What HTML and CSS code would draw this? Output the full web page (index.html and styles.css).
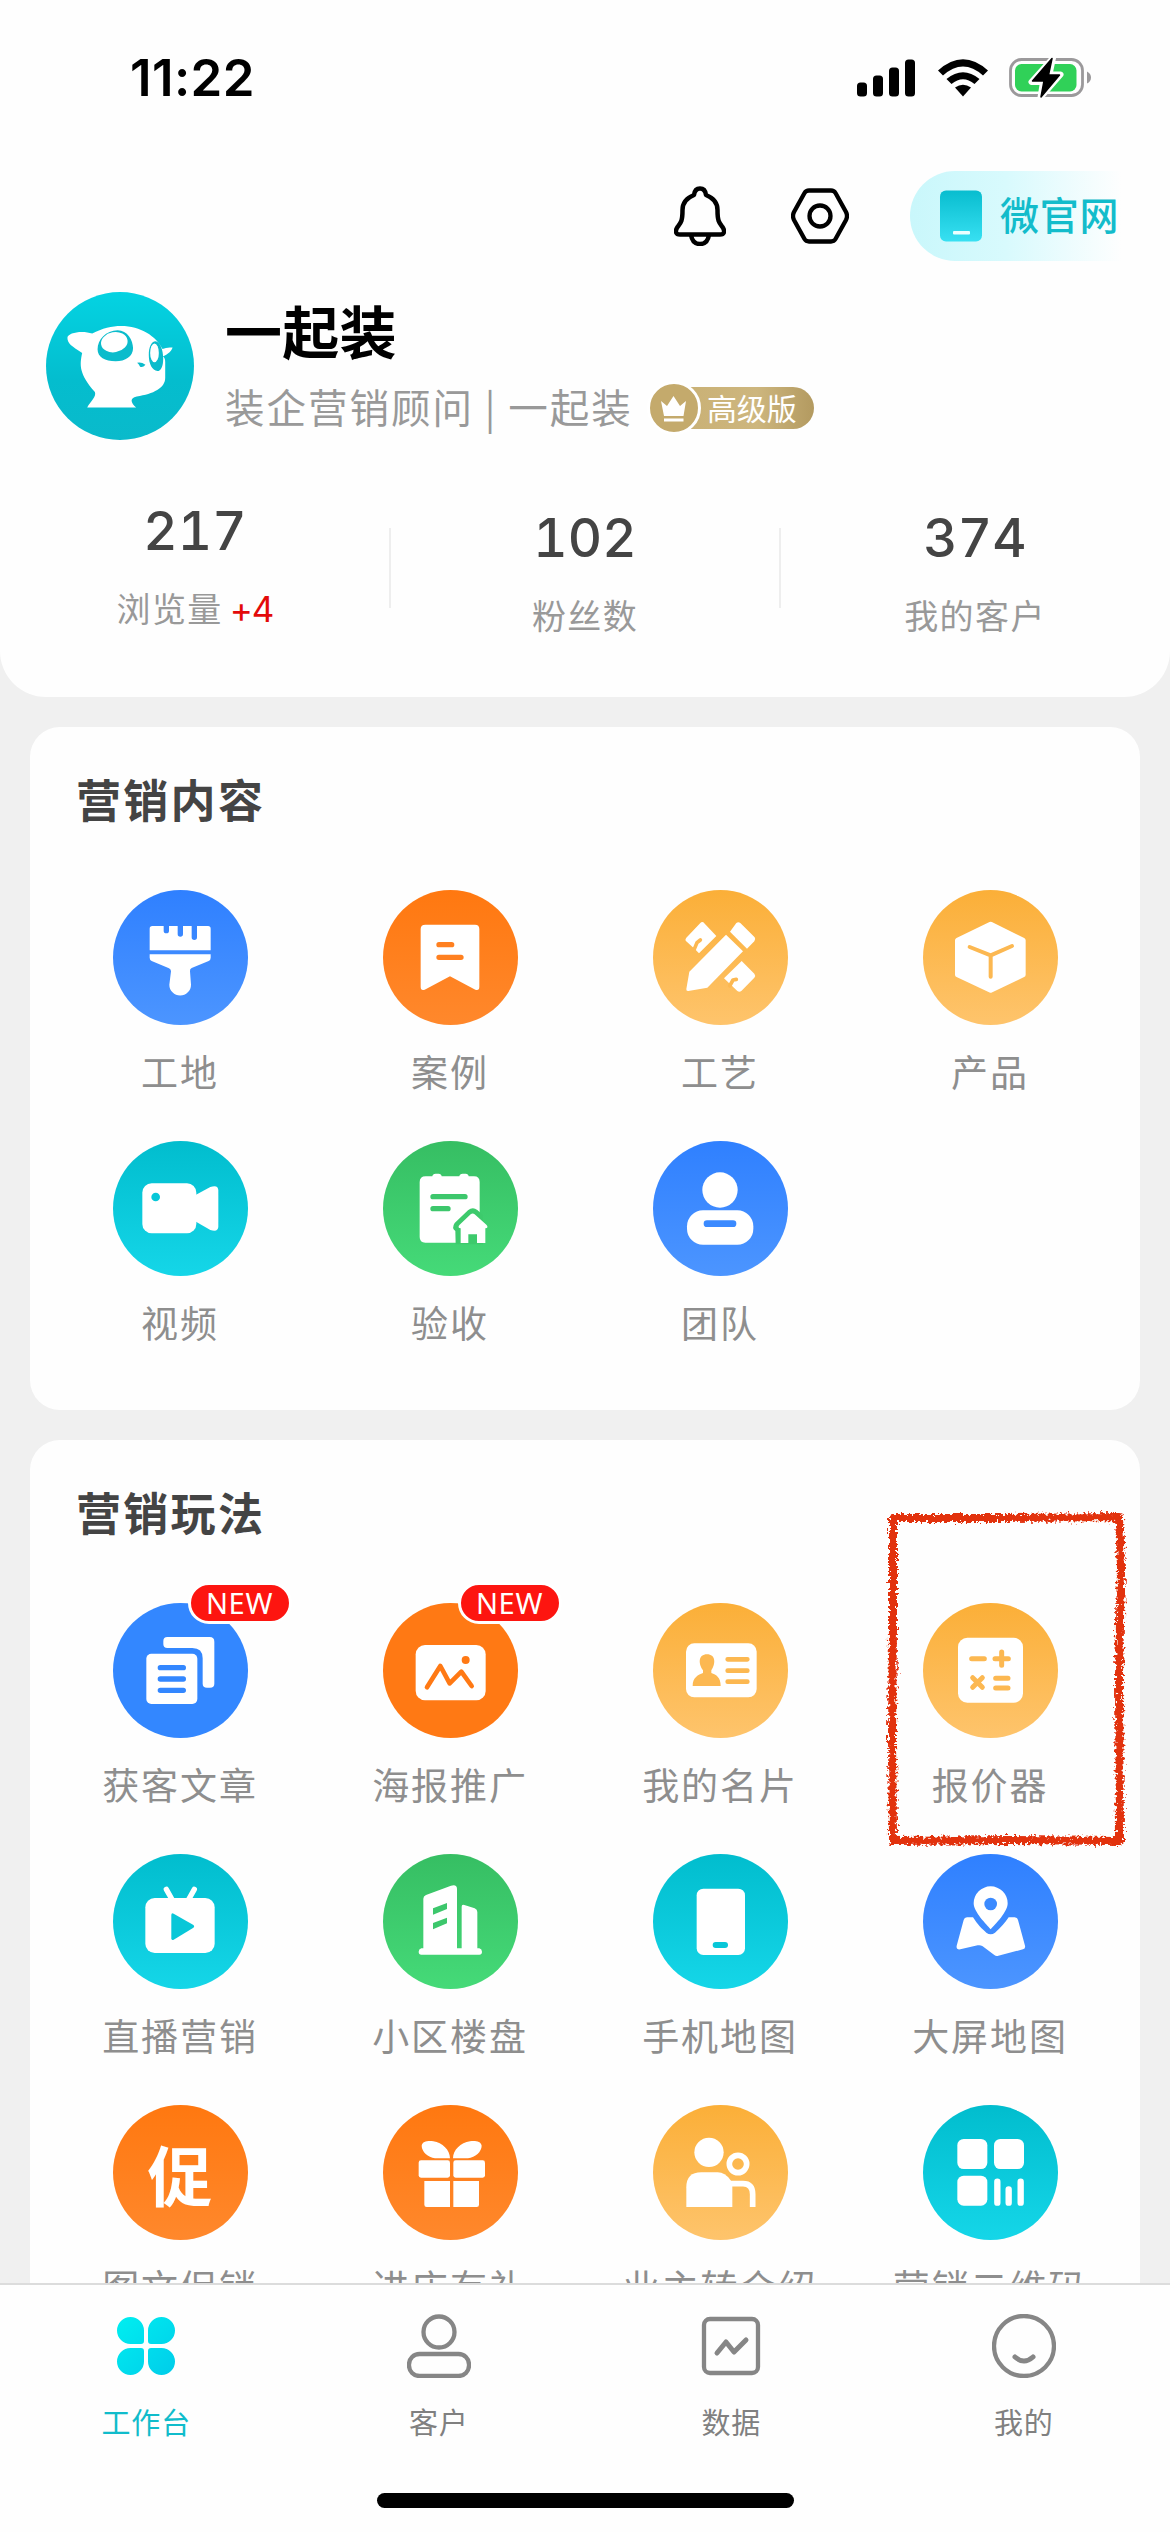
FILE: index.html
```html
<!DOCTYPE html>
<html lang="zh-CN">
<head>
<meta charset="utf-8">
<meta name="viewport" content="width=1170">
<title>工作台</title>
<link rel="stylesheet" href="styles.css">
</head>
<body>
<div class="phone">
  <header class="header">
    <div class="status">
      <span class="time">11:22</span>
      <div class="status-icons">
        <svg width="58" height="38" viewBox="0 0 58 38"><rect x="0" y="23.500" width="10" height="14" rx="3.500"/><rect x="16" y="16.500" width="10" height="21" rx="3.500"/><rect x="32" y="8.500" width="10" height="29" rx="3.500"/><rect x="48" y="0.500" width="10" height="37" rx="3.500"/></svg>
        <svg class="wifi" width="50" height="38" viewBox="0 0 50 38"><path d="M0 11.500Q25-11 50 11.500L45 16.500Q25-1.500 5 16.500Z"/><path d="M8.500 20Q25 6.500 41.500 20L36.500 25Q25 15.500 13.500 25Z"/><path d="M17 28.500Q25 23 33 28.500L25 37.500Z"/></svg>
        <svg class="battery" width="83" height="42" viewBox="0 0 83 42"><rect x="1.500" y="2.500" width="72" height="36" rx="11" fill="none" stroke="#9b999b" stroke-width="2.800"/><rect x="6" y="7" width="61.500" height="27.500" rx="6.500" fill="#30d158"/><path d="M78 14.500q4 2 4 6t-4 6z" fill="#9b999b"/><path d="M44 1L22.500 25H34L31.500 40.500 51.500 17.500H40.500Z" stroke="#fff" stroke-width="6" stroke-linejoin="round"/><path d="M43 1.500L23.500 24H35L32 40 50.500 18H39.500Z" stroke="#000" stroke-width="1.500" stroke-linejoin="round"/></svg>
      </div>
    </div>
    <div class="toolbar">
      <svg class="bell" width="52" height="60" viewBox="0 0 52 60" fill="none" stroke="#000" stroke-width="4.500" stroke-linejoin="round"><path d="M26 2.500C22 2.500 20.500 5 20 9 12.500 12 8.500 17 8.500 24 8.500 35 7 36.500 3.500 41 .5 45.500 2 48.500 6 48.500H46C50 48.500 51.500 45.500 48.500 41 45 36.500 43.500 35 43.500 24 43.500 17 39.500 12 32 9 31.500 5 30 2.500 26 2.500Z"/><path d="M17 49q1.500 9 9 9t9-9"/></svg>
      <svg class="gear" width="58" height="56" viewBox="0 0 58 56" fill="none" stroke="#000" stroke-width="4.300"><path d="M18 2.500H40Q43 2.500 44.500 5L55 24Q57 28 55 32L44.500 51Q43 53.500 40 53.500H18Q15 53.500 13.500 51L3 32Q1 28 3 24L13.500 5Q15 2.500 18 2.500Z"/><circle cx="29" cy="28" r="10.500"/></svg>
      <div class="site-pill">
        <svg width="42" height="52" viewBox="0 0 42 52"><defs><linearGradient id="siteFill" x1="0" y1="0" x2="0" y2="1"><stop offset="0" stop-color="#08bdcf"/><stop offset="1" stop-color="#38e0f2"/></linearGradient></defs><rect width="42" height="51" y=".5" rx="6" fill="url(#siteFill)"/><rect x="13" y="41" width="17" height="3.500" rx="1" fill="#eaffff"/></svg>
        <span>微官网</span>
      </div>
    </div>
    <div class="profile">
      <svg class="avatar" width="148" height="148" viewBox="49 36 442 442"><defs><linearGradient id="avatarFill" x1="0" y1="0" x2="0" y2="1"><stop offset="0" stop-color="#04d3e2"/><stop offset=".6" stop-color="#04bdce"/><stop offset="1" stop-color="#0abacb"/></linearGradient></defs>
        <circle cx="270" cy="257" r="221" fill="url(#avatarFill)"/>
        <path fill="#fff" d="M187 160C160 150 113 156 113 173 113 190 125 198 157 218 149 255 148 280 195 335 200 350 183 361 172 381H318C302 366 298 353 320 348 370 340 405 323 405 292V245Q405 233 398 229C415 222 425 210 427 202Q410 200 397 206C370 150 280 110 187 160Z"/>
        <path fill="#0bbccc" d="M203 207C203 178 228 151 263 150 292 150 309 180 309 204 309 228 286 243 257 243 225 243 203 230 203 207ZM356 225C356 200 364 183 376 183 390 184 399 210 399 235 399 258 392 272 382 272 366 271 356 250 356 225ZM321 247Q334 244 346 253 338 263 330 259 326 250 321 247Z"/>
        <ellipse cx="253" cy="186" rx="40" ry="30" fill="#fff" transform="rotate(-10 253 186)"/><ellipse cx="373" cy="218" rx="13" ry="28" fill="#fff"/>
      </svg>
      <div class="identity">
        <h1>一起装</h1>
        <div class="role"><span>装企营销顾问 | 一起装</span>
          <div class="level">
            <svg width="54" height="54" viewBox="0 0 54 54"><circle cx="27" cy="27" r="25.500" fill="#c4aa6c" stroke="#fff" stroke-width="3"/><path fill="#fff" d="M14 20L20 25 26.500 15 33 25 39 20 36.500 35H17ZM17 37.500H36.500V40.500H17Z"/></svg>
            <span>高级版</span>
          </div>
        </div>
      </div>
    </div>
    <div class="stats">
      <div class="stat stat-raised"><strong>217</strong><span>浏览量<em>+4</em></span></div>
      <div class="stat"><strong>102</strong><span>粉丝数</span></div>
      <div class="stat"><strong>374</strong><span>我的客户</span></div>
    </div>
  </header>

  <main class="content">
    <section class="card card-content">
      <h2>营销内容</h2>
      <div class="grid">
        <div class="item"><div class="icon blue"><svg viewBox="0 0 405 405"><path d="M118 108H152V122a8 8 0 0 0 16 0V108H194V132a8 8 0 0 0 16 0V108H236V142a8 8 0 0 0 16 0V108H285q8 0 8 8V181H110V116q0-8 8-8ZM110 193H293V203q0 7-6 10L236 234q-6 3-5 10L234 284a32 32 0 0 1-65 0L174 244q0-6-6-9L116 213q-6-3-6-10Z"/></svg></div><span>工地</span></div>
        <div class="item"><div class="icon orange"><svg viewBox="0 0 405 405"><path d="M127 104H276q13 0 13 13V290q0 13-12 9L201 259 125 299q-12 4-12-9V117q0-13 14-13Z"/><path class="cut" stroke-width="16" d="M168 164H206M168 202H234"/></svg></div><span>案例</span></div>
        <div class="item"><div class="icon amber"><svg viewBox="0 0 405 405"><path d="M219 134L270 184 163 293 106 303Q99 304 100 297L109 245ZM250 99Q256 94 262 99L305 142Q309 148 304 154L282 176 231 125ZM151 97L190 138 138 190 126 178 98 152Q96 148 100 143L142 99Q146 95 151 97ZM266 213L304 251Q309 257 304 263L265 303Q259 307 253 303L213 265Z"/><path class="cut" stroke-width="11" d="M122 182L132 158 142 150M230 288L240 270 250 268"/></svg></div><span>工艺</span></div>
        <div class="item"><div class="icon amber"><svg viewBox="0 0 405 405"><path stroke="#fff" stroke-width="16" stroke-linejoin="round" d="M203 103L300 151V254L203 300 104 254V151Z"/><path class="cut" stroke-width="12" d="M140 171L203 196 267 168M203 196V260"/></svg></div><span>产品</span></div>
        <div class="item"><div class="icon cyan"><svg viewBox="0 0 405 405"><rect x="88" y="127" width="162" height="150" rx="28"/><path d="M249 161L292 138Q316 130 316 149V256Q316 275 292 267L249 242Z"/><circle class="solid-cut" cx="128" cy="168" r="13"/></svg></div><span>视频</span></div>
        <div class="item"><div class="icon green"><svg viewBox="0 0 405 405"><path d="M128 106H148Q149 98 158 98H167Q175 98 176 106H229Q230 98 239 98H248Q256 98 257 106H273Q290 106 290 123V305H127Q110 305 110 288V123Q110 106 128 106Z"/><path class="cut" stroke-width="16" d="M150 167H246M150 203H195"/><path fill="#3dca6c" d="M218 310L217 270Q205 261 215 246L255 208Q269 196 283 207L300 222V310H218Z"/><path d="M263 220Q269 215 275 220L310 251Q318 260 307 262V306H282V280H256V306H233V262Q222 260 230 251Z"/></svg></div><span>验收</span></div>
        <div class="item"><div class="icon blue"><svg viewBox="0 0 405 405"><circle cx="201" cy="147" r="53"/><rect x="102" y="208" width="199" height="103" rx="48"/><path class="cut" stroke-width="20" d="M162 248H240"/></svg></div><span>团队</span></div>
      </div>
    </section>

    <section class="card card-play">
      <h2>营销玩法</h2>
      <div class="grid">
        <div class="item"><div class="icon blue flat"><svg viewBox="0 0 405 405"><rect x="100" y="152" width="153" height="151" rx="15"/><path d="M163 102H290Q304 102 304 116V242Q304 254 291 254H282Q269 254 269 242V166Q269 135 238 135H163Q151 135 151 124V114Q151 102 163 102Z"/><path class="cut" stroke-width="16" d="M142 194H211M142 228H211M142 262H211"/></svg><b class="new">NEW</b></div><span>获客文章</span></div>
        <div class="item"><div class="icon orange flat"><svg viewBox="0 0 405 405"><rect x="98" y="126" width="210" height="166" rx="28"/><path class="cut" stroke-width="14" d="M132 253L172 189 200 241 235 206 266 249"/><circle class="solid-cut" cx="248" cy="171" r="12"/></svg><b class="new">NEW</b></div><span>海报推广</span></div>
        <div class="item"><div class="icon amber"><svg viewBox="0 0 405 405"><rect x="99" y="121" width="212" height="162" rx="25"/><path class="solid-cut" d="M162 154C188 154 189 182 175 202V210C190 216 203 222 203 249H119C119 222 136 216 150 210V202C135 182 136 154 162 154Z"/><path class="cut" stroke-width="14" d="M224 169H283M224 203H283M224 236H283"/></svg></div><span>我的名片</span></div>
        <div class="item"><div class="icon amber"><svg viewBox="0 0 405 405"><rect x="105" y="104" width="195" height="195" rx="28"/><path class="cut" stroke-width="15" d="M146 167H184M216 167H256M236 147V187M149 224L178 253M178 224L149 253M218 226H255M218 255H255"/></svg></div><span>报价器</span></div>
        <div class="item"><div class="icon cyan"><svg viewBox="0 0 405 405"><rect x="97" y="132" width="208" height="165" rx="28"/><path stroke="#fff" stroke-width="16" stroke-linecap="round" d="M160 106L178 138M244 106L226 138"/><path class="solid-cut" d="M175 183Q175 176 182 179L240 212Q247 217 240 222L182 257Q175 260 175 253Z"/></svg></div><span>直播营销</span></div>
        <div class="item"><div class="icon green"><svg viewBox="0 0 405 405"><path d="M121 134Q121 126 129 123L204 95Q222 90 222 105V283H236V158Q236 150 244 153L275 163Q283 166 283 174V283H289Q297 285 297 293 297 302 289 302H115Q107 302 107 293 107 285 115 283H121Z"/><path class="solid-cut" d="M150 163L192 147V165L150 182ZM150 207L192 191V208L150 226Z"/></svg></div><span>小区楼盘</span></div>
        <div class="item"><div class="icon cyan"><svg viewBox="0 0 405 405"><rect x="131" y="104" width="145" height="199" rx="20"/><path class="cut" stroke-width="18" d="M188 273H216"/></svg></div><span>手机地图</span></div>
        <div class="item"><div class="icon blue"><svg viewBox="0 0 405 405"><path d="M203 226C190 211 152 174 152 148A51 51 0 0 1 254 148C254 174 217 211 203 226Z"/><circle class="solid-cut" cx="203" cy="150" r="19"/><path d="M132 190H150C164 212 176 224 190 236Q203 246 216 236C234 220 246 207 257 190H275Q283 190 285 198L306 275Q308 284 300 286L226 305Q219 307 214 303L179 277Q172 272 164 274L112 286Q99 288 101 275L122 198Q124 190 132 190Z"/></svg></div><span>大屏地图</span></div>
        <div class="item"><div class="icon orange"><b class="promo">促</b></div><span>图文促销</span></div>
        <div class="item"><div class="icon orange"><svg viewBox="0 0 405 405"><rect x="107" y="166" width="94" height="52" rx="7"/><rect x="211" y="166" width="95" height="52" rx="7"/><path d="M124 228H201V306H131Q124 306 124 299ZM211 228H288V299Q288 306 281 306H211ZM201 160H156C135 157 116 140 116 122 118 109 135 107 151 109 178 113 201 135 201 160ZM210 160H255C277 157 296 140 296 122 294 109 277 107 261 109 233 113 210 135 210 160Z"/></svg></div><span>进店有礼</span></div>
        <div class="item"><div class="icon amber"><svg viewBox="0 0 405 405"><circle cx="168" cy="142" r="44"/><path d="M100 306V247Q100 202 145 202H194Q216 202 233 226L238 236V306Z"/><g fill="none" stroke="#fff" stroke-width="17"><circle cx="255" cy="177" r="26"/><path d="M232 236H270Q299 236 299 268V306"/></g></svg></div><span>业主转介绍</span></div>
        <div class="item"><div class="icon cyan"><svg viewBox="0 0 405 405"><rect x="103" y="102" width="90" height="90" rx="19"/><rect x="213" y="102" width="90" height="90" rx="19"/><rect x="103" y="212" width="90" height="90" rx="19"/><path stroke="#fff" stroke-width="19" stroke-linecap="round" d="M223 230V293M257 253V293M293 230V293"/></svg></div><span>营销二维码</span></div>
      </div>
      <svg class="marker" width="252" height="344" viewBox="0 0 252 344"><defs><filter id="crayon" x="-5%" y="-5%" width="110%" height="110%"><feTurbulence type="fractalNoise" baseFrequency=".35" numOctaves="3" seed="4" result="n"/><feDisplacementMap in="SourceGraphic" in2="n" scale="9" xChannelSelector="R" yChannelSelector="G"/></filter></defs><path filter="url(#crayon)" fill="none" stroke="#e2300f" stroke-width="8" stroke-linejoin="round" d="M13 11H122L239 10 241 60 239 170 240 334 130 333 13 334 12 230 13 120Z"/></svg>
    </section>
  </main>

  <nav class="tabs">
    <div class="tab-row">
      <div class="tab active"><svg width="64" height="64" viewBox="0 0 64 64"><defs><linearGradient id="leafFill" gradientUnits="userSpaceOnUse" x1="4" y1="4" x2="60" y2="60"><stop offset="0" stop-color="#00eef0"/><stop offset="1" stop-color="#00cdea"/></linearGradient></defs><path fill="url(#leafFill)" d="M16.500 3a13.500 13.500 0 0 1 13.500 13.500V27q0 3-3 3H16.500a13.500 13.500 0 0 1 0-27ZM47.500 3a13.500 13.500 0 0 1 0 27H37q-3 0-3-3V16.500A13.500 13.500 0 0 1 47.500 3ZM16.500 34H27q3 0 3 3V47.500A13.500 13.500 0 1 1 16.500 34ZM37 34H47.500A13.500 13.500 0 1 1 34 47.500V37q0-3 3-3Z"/></svg><span>工作台</span></div>
      <div class="tab"><svg width="64" height="64" viewBox="0 0 64 64"><circle cx="32" cy="18" r="15.500"/><rect x="2" y="40" width="60" height="22" rx="10.500"/></svg><span>客户</span></div>
      <div class="tab"><svg width="64" height="64" viewBox="0 0 64 64"><rect x="5" y="5" width="54" height="54" rx="6"/><path stroke-width="5" stroke-linecap="round" stroke-linejoin="round" d="M18 39L27 28 35 38 47 26"/></svg><span>数据</span></div>
      <div class="tab"><svg width="64" height="64" viewBox="0 0 64 64"><circle cx="32" cy="32" r="30"/><path stroke-width="5" stroke-linecap="round" d="M23 43q9 8 18 0"/></svg><span>我的</span></div>
    </div>
    <div class="home-indicator"></div>
  </nav>
</div>
</body>
</html>
```
FILE: styles.css
```css
* { box-sizing: border-box; margin: 0; padding: 0; }

body {
  width: 1170px;
  background: #f0f0f0;
  font-family: "Noto Sans CJK SC", sans-serif;
  color: #444;
}

svg { display: block; flex: none; }

.phone {
  display: flex;
  flex-direction: column;
  height: 2532px;
  overflow: hidden;
}

/* Header */
.header {
  flex: none;
  height: 697px;
  background: #fefefe;
  border-radius: 0 0 46px 46px;
}

.status {
  display: flex;
  justify-content: space-between;
  align-items: center;
  height: 155px;
  padding: 0 78px 0 130px;
}

.time {
  font: 600 51px/1 Inter, sans-serif;
  color: #000;
  letter-spacing: 0.4px;
}

.status-icons { display: flex; align-items: center; }
.wifi { margin-left: 23px; }
.battery { margin-left: 21px; }

.toolbar {
  display: flex;
  justify-content: flex-end;
  align-items: center;
  height: 90px;
  margin-top: 16px;
  padding-right: 48px;
}

.gear { margin-left: 65px; }

.site-pill {
  display: flex;
  align-items: center;
  gap: 18px;
  width: 212px;
  height: 90px;
  margin-left: 61px;
  padding-left: 30px;
  border-radius: 45px 0 0 45px;
  background: linear-gradient(90deg, #c9f7fb 0%, #d8fafd 45%, #fefefe 100%);
  color: #13bccb;
  font-size: 39px;
  font-weight: 500;
  line-height: 84px;
  letter-spacing: 0.7px;
  white-space: nowrap;
}

.site-pill span { height: 90px; }

.profile {
  display: flex;
  align-items: center;
  gap: 31px;
  height: 148px;
  margin: 31px 0 0 46px;
}

.identity h1 {
  padding-top: 2px;
  color: #000;
  font-size: 57px;
  font-weight: 700;
  line-height: 76px;
  letter-spacing: 0.3px;
}

.role {
  display: flex;
  align-items: center;
  height: 76px;
  color: #999;
  font-size: 39.500px;
  letter-spacing: 2px;
  white-space: pre;
}

.level {
  display: flex;
  align-items: center;
  margin: 5px 0 0 14px;
}

.level svg { position: relative; z-index: 1; }

.level span {
  width: 143px;
  height: 42px;
  margin-left: -30px;
  padding-left: 36px;
  border-radius: 21px;
  background: linear-gradient(90deg, #c9b074, #cdb67e 60%, #b39a60);
  color: #fff;
  font-size: 30px;
  line-height: 41px;
  letter-spacing: 0;
}

.stats { display: flex; margin-top: 63px; }

.stat {
  position: relative;
  display: flex;
  flex: 1;
  flex-direction: column;
  align-items: center;
  padding-top: 7px;
}

.stat-raised { padding-top: 0; }

.stat + .stat::before {
  content: "";
  position: absolute;
  left: -1px;
  top: 25px;
  width: 2px;
  height: 80px;
  background: #eee;
}

.stat strong {
  font: 500 53px/56px Inter, sans-serif;
  font-variant-numeric: tabular-nums;
  letter-spacing: 0.2px;
}

.stat span {
  margin-top: 23px;
  color: #999;
  font-size: 34px;
  line-height: 52px;
  letter-spacing: 1.400px;
}

.stat em {
  margin-left: 7px;
  color: #e30a0a;
  font: 400 35px/1 Inter, sans-serif;
  letter-spacing: -1px;
}

/* Feature cards */
.content {
  flex: 1;
  min-height: 0;
  overflow: hidden;
  padding: 30px 30px 0;
}

.card {
  position: relative;
  padding: 44px 15px 0;
  border-radius: 30px;
  background: #fefefe;
}

.card-content { height: 683px; }
.card-play { height: 960px; margin-top: 30px; }

.card h2 {
  padding-left: 31px;
  font-size: 45px;
  font-weight: 700;
  line-height: 56px;
  letter-spacing: 2.300px;
}

.grid {
  display: grid;
  grid-template-columns: repeat(4, 1fr);
  grid-auto-rows: 251px;
  margin-top: 63px;
}

.item {
  display: flex;
  flex-direction: column;
  align-items: center;
}

.item > span {
  margin-top: 20px;
  color: #8e8e8e;
  font-size: 37px;
  font-weight: 400;
  line-height: 52px;
  letter-spacing: 1.900px;
  white-space: nowrap;
}

.icon {
  position: relative;
  display: flex;
  align-items: center;
  justify-content: center;
  flex: none;
  width: 135px;
  height: 135px;
  border-radius: 50%;
}

.icon svg { width: 135px; height: 135px; fill: #fff; }
.icon .cut { fill: none; stroke: currentColor; stroke-linecap: round; stroke-linejoin: round; }
.icon .solid-cut { fill: currentColor; }

.blue { color: #3b8aff; background: linear-gradient(#2f80ff, #4c95ff); }
.orange { color: #ff8020; background: linear-gradient(#ff7810, #ff882c); }
.amber { color: #fcb851; background: linear-gradient(#fbaf38, #fec46c); }
.cyan { color: #08c7d8; background: linear-gradient(#01bdce, #15d6e8); }
.green { color: #3dc76c; background: linear-gradient(#36be63, #45da78); }
.flat.blue { color: #3387ff; background: #3387ff; }
.flat.orange { color: #ff7914; background: #ff7914; }

.new {
  position: absolute;
  left: 75px;
  top: -21px;
  width: 104px;
  height: 42px;
  border: 3px solid #fff;
  border-radius: 21px;
  background: #fd1510;
  color: #fff;
  font: 400 29px/36px "Noto Sans", sans-serif;
  letter-spacing: 0.7px;
  text-align: center;
}

.promo {
  color: #fff;
  font-size: 65px;
  font-weight: 700;
  line-height: 130px;
}

.marker {
  position: absolute;
  left: 850px;
  top: 67px;
}

/* Bottom navigation */
.tabs {
  flex: none;
  height: 249px;
  border-top: 2px solid #dcdcdc;
  background: #fefefe;
}

.tab-row { display: flex; height: 208px; padding-top: 29px; }

.tab {
  display: flex;
  flex: 1;
  flex-direction: column;
  align-items: center;
  color: #808080;
  font-size: 29px;
  line-height: 44px;
  letter-spacing: 0.8px;
}

.tab svg { fill: none; stroke: #868686; stroke-width: 4.300; }
.tab.active svg { stroke: none; }
.tab span { margin-top: 21px; }
.tab.active { color: #10bccb; }

.home-indicator {
  width: 417px;
  height: 15px;
  margin: 0 auto;
  border-radius: 8px;
  background: #000;
}
```
